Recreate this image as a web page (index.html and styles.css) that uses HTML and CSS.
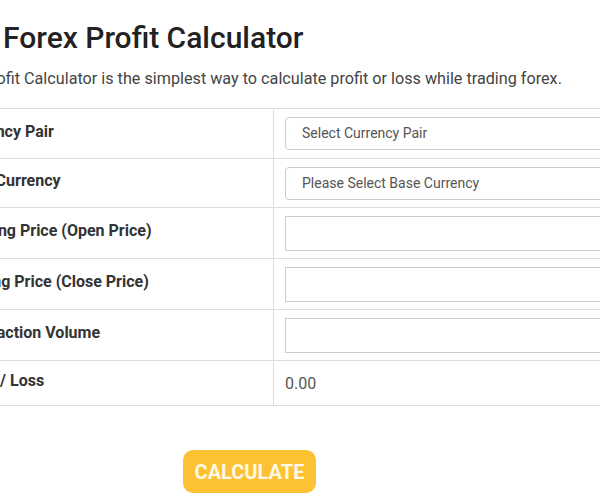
FILE: index.html
```html
<!DOCTYPE html>
<html>
<head>
	<meta charset="utf-8">
	<title>Forex Profit Calculator</title>
	<link rel="stylesheet" href="styles.css">
</head>
<body>
<div id="calc">
	<h1 class="title">Free Forex Profit Calculator</h1>
	<p class="intro">Forex Profit Calculator is the simplest way to calculate profit or loss while trading forex.</p>
	<table class="grid">
		<tr class="first">
			<th>Currency Pair</th>
			<td><div class="select">Select Currency Pair</div></td>
		</tr>
		<tr>
			<th>Base Currency</th>
			<td><div class="select">Please Select Base Currency</div></td>
		</tr>
		<tr>
			<th>Opening Price (Open Price)</th>
			<td><input class="field" type="text"></td>
		</tr>
		<tr>
			<th>Closing Price (Close Price)</th>
			<td><input class="field" type="text"></td>
		</tr>
		<tr>
			<th>Transaction Volume</th>
			<td><input class="field" type="text"></td>
		</tr>
		<tr class="result">
			<th>Profit / Loss</th>
			<td>0.00</td>
		</tr>
	</table>
	<div class="actions">
		<button class="btn" type="button">CALCULATE</button>
	</div>
</div>
</body>
</html>
```

FILE: styles.css
```css
body,h1,p,table{margin:0;padding:0;}
body{background:#fff;font-family:Roboto,"Liberation Sans",Arial,sans-serif;color:#333;overflow:hidden;}
#calc{width:760px;margin-left:-63px;padding-top:18px;}
#calc .title{font-size:30px;line-height:40px;font-weight:500;color:#222;}
#calc .intro{font-size:16.2px;line-height:24px;color:#444;margin-top:9px;}
#calc .grid{width:100%;border-collapse:collapse;margin-top:17px;border-top:1px solid #ddd;}
#calc .grid th,#calc .grid td{border-bottom:1px solid #ddd;padding:8px 12px 7px 11px;vertical-align:middle;}
#calc .grid .first td{padding-bottom:8px;}
#calc .grid th{width:305px;text-align:left;font-size:16px;font-weight:700;color:#333;padding:4px 12px 9px 19px;border-right:1px solid #ddd;}
#calc .select{height:31px;border:1px solid #ccc;border-radius:4px;padding:0 16px;font-size:14px;line-height:31px;color:#555;}
#calc .field{display:block;box-sizing:border-box;width:100%;height:35px;border:1px solid #ccc;border-radius:0;margin:0;}
#calc .result td{font-size:16px;color:#555;height:29px;}
#calc .actions{padding:44px 0 0 246px;}
#calc .btn{background:#fdc233;color:#fff8e4;border:0;border-radius:10px;height:43px;width:133px;font-family:Roboto,"Liberation Sans",Arial,sans-serif;font-size:20px;font-weight:700;padding:0;}
```
